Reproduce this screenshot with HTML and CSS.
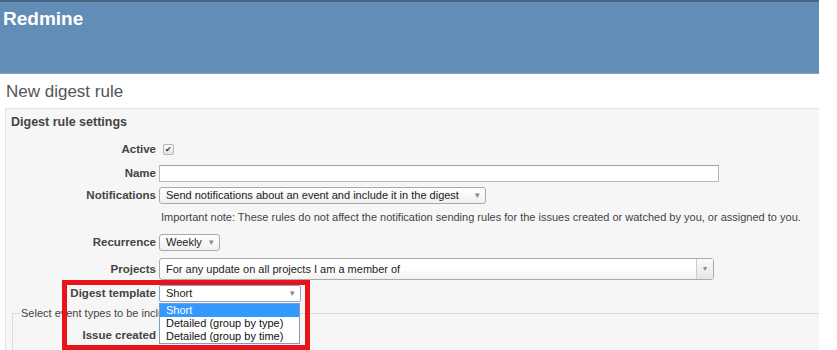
FILE: index.html
```html
<!DOCTYPE html>
<html lang="en">
<head>
    <meta charset="UTF-8">
    <title>New digest rule - Redmine</title>
    <link rel="stylesheet" href="styles.css">
</head>
<body>
<div class="page">
    <div class="header">
        <h1>Redmine</h1>
    </div>

    <div class="content">
        <h2>New digest rule</h2>

        <div class="box">
            <h3>Digest rule settings</h3>

            <div class="row row-active">
                <label>Active</label>
                <span class="checkbox">&#10004;</span>
            </div>
            <div class="row row-name">
                <label>Name</label>
                <span class="text-input"></span>
            </div>
            <div class="row row-notif">
                <label>Notifications</label>
                <span class="select select-notif">Send notifications about an event and include it in the digest<i class="arrow">&#9662;</i></span>
            </div>
            <p class="note">Important note: These rules do not affect the notification sending rules for the issues created or watched by you, or assigned to you.</p>
            <div class="row row-recur">
                <label>Recurrence</label>
                <span class="select select-recur">Weekly<i class="arrow">&#9662;</i></span>
            </div>
            <div class="row row-projects">
                <label>Projects</label>
                <span class="combo">For any update on all projects I am a member of<i class="combo-btn">&#9662;</i></span>
            </div>
            <div class="row row-template">
                <label>Digest template</label>
                <div class="dropdown">
                    <span class="select select-template">Short<i class="arrow">&#9662;</i></span>
                    <ul class="options">
                        <li class="selected">Short</li>
                        <li>Detailed (group by type)</li>
                        <li>Detailed (group by time)</li>
                    </ul>
                </div>
            </div>

            <fieldset>
                <legend>Select event types to be included in the digest</legend>
                <div class="row row-issue">
                    <label>Issue created</label>
                </div>
            </fieldset>
        </div>
    </div>

    <div class="highlight"></div>
</div>
</body>
</html>
```

FILE: styles.css
```css
body {
    margin: 0;
    font-family: "Liberation Sans", Arial, sans-serif;
    color: #333;
    background: #fff;
    overflow: hidden;
}
.page {
    position: relative;
    width: 819px;
    height: 350px;
    overflow: hidden;
}
.header {
    height: 71px;
    background: #628db6;
    border-top: 2px solid #46647f;
    border-bottom: 1px solid #86a5c4;
}
.header h1 {
    margin: 0;
    padding: 6px 0 0 3px;
    font-size: 19px;
    line-height: 22px;
    font-weight: bold;
    color: #fff;
}
.content {
    padding: 0 0 0 5px;
}
.content h2 {
    margin: 0;
    padding: 7px 0 0 1px;
    height: 27px;
    font-size: 17px;
    line-height: 22px;
    font-weight: normal;
    color: #555;
}
.box {
    background: #f6f6f6;
    border-top: 1px solid #e2e2e2;
    border-left: 1px solid #e2e2e2;
    padding: 4px 0 0 0;
    height: 260px;
}
.box h3 {
    margin: 0 0 0 5px;
    font-size: 12.5px;
    line-height: 18px;
    color: #444;
}
.row {
    display: flex;
    align-items: center;
    height: 22px;
}
.row label {
    width: 150px;
    flex: none;
    text-align: right;
    font-weight: bold;
    font-size: 11.5px;
    color: #444;
    margin-right: 3px;
}
.row-active { margin-top: 7px; }
.row-name { margin-top: 2px; }
.row-recur { margin-top: 6px; }
.row-projects { margin-top: 4px; height: 24px; }
.row-template { margin-top: 1px; }

.checkbox {
    width: 9px;
    height: 9px;
    margin-left: 4px;
    border: 1px solid #b5b5b5;
    border-radius: 2px;
    background: linear-gradient(#fdfdfd, #e4e4e4);
    font-size: 8px;
    line-height: 9px;
    text-align: center;
    color: #333;
}
.text-input {
    width: 558px;
    height: 15px;
    background: #fff;
    border: 1px solid #b9b9b9;
    border-top-color: #a0a0a0;
}
.select {
    position: relative;
    height: 15px;
    box-sizing: content-box;
    padding-left: 6px;
    border: 1px solid #aaa;
    border-radius: 3px;
    background: linear-gradient(#fff, #f0f0f0);
    font-size: 11px;
    line-height: 15px;
    color: #222;
    white-space: nowrap;
}
.select .arrow {
    position: absolute;
    right: 5px;
    top: 0;
    font-style: normal;
    font-size: 9px;
    color: #888;
}
.select-notif { width: 319px; }
.select-recur { width: 53px; }
.select-template {
    display: block;
    width: 134px;
    border-color: #7fa6d6;
    border-radius: 2px;
    background: #fff;
}
.note {
    margin: 3px 0 0 155px;
    font-size: 11px;
    line-height: 16px;
    color: #444;
    white-space: nowrap;
}
.combo {
    position: relative;
    width: 547px;
    height: 20px;
    padding-left: 6px;
    border: 1px solid #aaa;
    border-radius: 3px;
    background: linear-gradient(#fff 50%, #f1f1f1);
    font-size: 11px;
    line-height: 20px;
    color: #222;
}
.combo-btn {
    position: absolute;
    right: 0;
    top: 0;
    width: 16px;
    height: 20px;
    border-left: 1px solid #ccc;
    background: linear-gradient(#fafafa, #e6e6e6);
    font-style: normal;
    font-size: 8px;
    line-height: 20px;
    text-align: center;
    color: #888;
}
.dropdown {
    position: relative;
}
.options {
    position: absolute;
    left: 0;
    top: 18px;
    z-index: 2;
    width: 139px;
    margin: 0;
    padding: 0;
    list-style: none;
    background: #fff;
    border: 1px solid #7f9db9;
}
.options li {
    height: 13px;
    padding-left: 6px;
    font-size: 11px;
    line-height: 13px;
    color: #111;
    white-space: nowrap;
}
.options li.selected {
    background: #3399ff;
    color: #fff;
}
fieldset {
    margin: 2px 0 0 6px;
    padding: 0;
    border: 1px solid #dcdcdc;
    border-right: none;
    height: 60px;
}
legend {
    margin-left: 7px;
    padding: 0 1px;
    font-size: 11px;
    line-height: 14px;
    color: #444;
}
.row-issue {
    margin-top: 4px;
}
.row-issue label {
    width: 143px;
}
.highlight {
    position: absolute;
    left: 62px;
    top: 280px;
    width: 238px;
    height: 60px;
    border: 5px solid #e8141c;
    z-index: 3;
}
```
